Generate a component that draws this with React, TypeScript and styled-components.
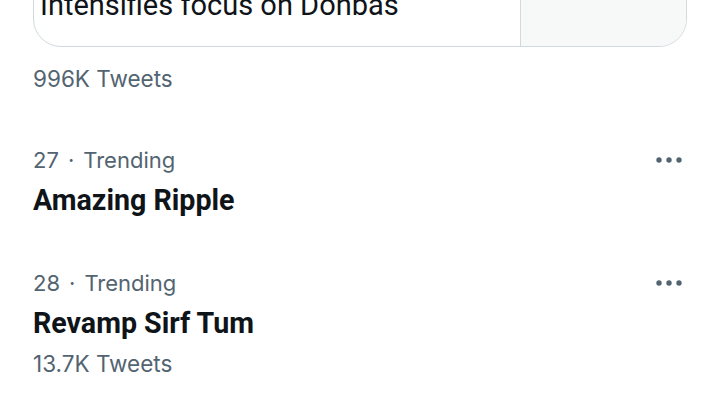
import React from 'react';
import styled, { createGlobalStyle } from 'styled-components';

const GlobalStyle = createGlobalStyle`
  html, body {
    margin: 0;
    padding: 0;
    background: #ffffff;
    overflow: hidden;
  }
  body {
    font-family: Inter, "Noto Sans", sans-serif;
    -webkit-font-smoothing: antialiased;
  }
`;

type Trend = {
  rank: number;
  name: string;
  count?: string;
};

const trends: Trend[] = [
  { rank: 27, name: 'Amazing Ripple' },
  { rank: 28, name: 'Revamp Sirf Tum', count: '13.7K Tweets' },
];

function MoreIcon() {
  return (
    <svg width="30" height="10" viewBox="0 0 30 10">
      <circle cx="5" cy="5" r="2.7" fill="#536471" />
      <circle cx="15" cy="5" r="2.7" fill="#536471" />
      <circle cx="25" cy="5" r="2.7" fill="#536471" />
    </svg>
  );
}

export default function App() {
  return (
    <>
      <GlobalStyle />
      <Page>
        <TrendBlock>
          <NewsCard>
            <NewsText>Intensifies focus on Donbas</NewsText>
            <Thumb />
          </NewsCard>
          <Count>996K Tweets</Count>
        </TrendBlock>

        {trends.map(t => (
          <TrendRow key={t.rank}>
            <TrendBody>
              <Meta>
                {t.rank}
                <Dot>·</Dot>
                Trending
              </Meta>
              <Name>{t.name}</Name>
              {t.count && <Count>{t.count}</Count>}
            </TrendBody>
            <MoreButton>
              <MoreIcon />
            </MoreButton>
          </TrendRow>
        ))}
      </Page>
    </>
  );
}

const Page = styled.div`
  margin-top: -53px;
  padding: 0 33px;
  display: flex;
  flex-direction: column;
  gap: 41px;

  & > * + * + * {
    margin-top: 2px;
  }
`;

const TrendBlock = styled.div`
  display: flex;
  flex-direction: column;
  gap: 11px;
`;

const NewsCard = styled.div`
  display: flex;
  height: 98px;
  border: 1px solid #cfd9de;
  border-radius: 28px;
  overflow: hidden;
`;

const NewsText = styled.div`
  flex: 1;
  display: flex;
  align-items: flex-end;
  padding: 0 24px 24px 6px;
  font-family: Roboto, "Noto Sans", sans-serif;
  font-size: 29px;
  line-height: 34px;
  color: #0f1419;
`;

const Thumb = styled.div`
  width: 165px;
  border-left: 1px solid #cfd9de;
  background: #f7f9f9;
`;

const TrendRow = styled.div`
  display: flex;
  align-items: flex-start;
  justify-content: space-between;
`;

const TrendBody = styled.div`
  display: flex;
  flex-direction: column;
`;

const Meta = styled.div`
  font-size: 22px;
  line-height: 40px;
  color: #536471;
`;

const Dot = styled.span`
  margin: 0 9px;
`;

const Name = styled.div`
  font-family: Roboto, "Noto Sans", sans-serif;
  font-size: 28.6px;
  font-weight: 700;
  line-height: 40px;
  color: #0f1419;
`;

const Count = styled.div`
  font-size: 22.5px;
  line-height: 41px;
  color: #536471;
`;

const MoreButton = styled.div`
  display: flex;
  align-items: center;
  height: 40px;
  margin-right: 3px;
`;
